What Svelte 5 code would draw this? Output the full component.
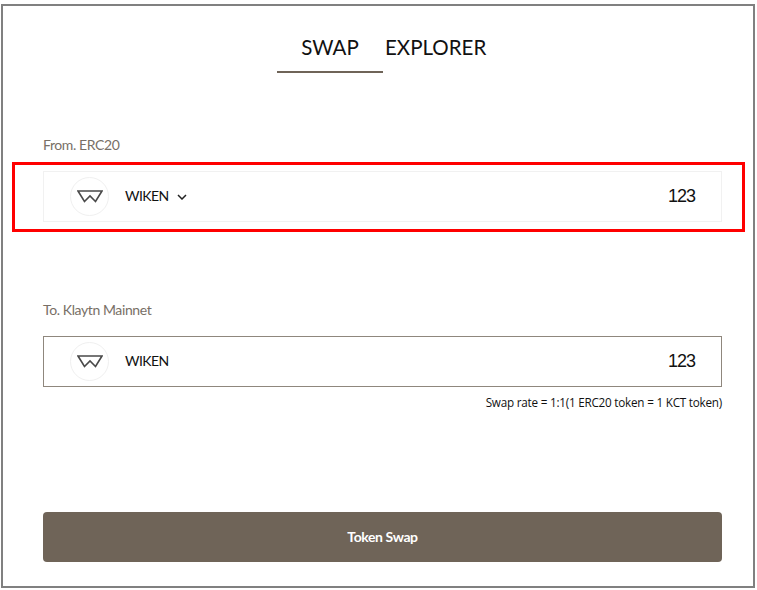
<script lang="ts">
  const tabs = [
    { name: "SWAP", active: true },
    { name: "EXPLORER", active: false },
  ];
</script>

{#snippet logo()}
  <span class="logo">
    <svg width="26" height="13" viewBox="0 0 26 13" fill="none" stroke="#4a4a4a" stroke-width="1.6">
      <path d="M1 1H25L18.5 11.5L13 6L7.5 11.5Z" />
    </svg>
  </span>
{/snippet}

<div class="frame">
  <nav class="tabs">
    {#each tabs as tab}
      <span class="tab" class:active={tab.active}>{tab.name}</span>
    {/each}
  </nav>

  <section class="from">
    <div class="label">From. ERC20</div>
    <div class="highlight">
      <div class="token light">
        {@render logo()}
        <span class="name">WIKEN</span>
        <svg class="chevron" width="10" height="6" viewBox="0 0 10 6" fill="none" stroke="#222" stroke-width="1.5">
          <path d="M1 1L5 5L9 1" />
        </svg>
        <span class="amount">123</span>
      </div>
    </div>
  </section>

  <section class="to">
    <div class="label">To. Klaytn Mainnet</div>
    <div class="token dark">
      {@render logo()}
      <span class="name">WIKEN</span>
      <span class="amount">123</span>
    </div>
    <div class="rate">Swap rate = 1:1(1 ERC20 token = 1 KCT token)</div>
  </section>

  <button class="swap">Token Swap</button>
</div>

<style>
  :global(body) {
    background: #fff;
  }

  .frame {
    box-sizing: border-box;
    width: 754px;
    height: 584px;
    margin: 4px 0 0 1px;
    border: 2px solid #808080;
    padding: 0 32px 0 40px;
    font-family: Lato, sans-serif;
    color: #111;
  }

  .tabs {
    display: flex;
    margin-left: 234px;
    height: 67px;
  }

  .tab {
    box-sizing: border-box;
    height: 67px;
    padding-top: 28px;
    font-size: 20.5px;
    line-height: 26px;
  }

  .tab.active {
    width: 106px;
    text-align: center;
    border-bottom: 2px solid #6f6458;
    margin-right: 2px;
  }

  .from {
    margin-top: 63px;
  }

  .label {
    font-size: 14px;
    letter-spacing: -0.4px;
    line-height: 18px;
    color: #786f66;
  }

  .highlight {
    box-sizing: border-box;
    width: 733px;
    height: 70px;
    margin: 8px 0 0 -31px;
    border: 3px solid #f00;
    padding: 6px 0 0 28px;
  }

  .token {
    box-sizing: border-box;
    width: 679px;
    height: 51px;
    display: flex;
    align-items: center;
    padding: 0 26px;
  }

  .token.light {
    border: 1px solid #f1f1f1;
  }

  .token.dark {
    border: 1px solid #8f877d;
    margin-top: 17px;
  }

  .logo {
    box-sizing: border-box;
    width: 39px;
    height: 39px;
    border: 1px solid #f0f0f0;
    border-radius: 50%;
    display: flex;
    align-items: center;
    justify-content: center;
  }

  .name {
    margin: 0 0 2px 16px;
    font-size: 14px;
    letter-spacing: -0.6px;
    color: #111;
  }

  .chevron {
    margin-left: 9px;
  }

  .amount {
    margin: 0 0 1px auto;
    font-family: "Liberation Sans", sans-serif;
    font-size: 18px;
    letter-spacing: -1px;
  }

  .to {
    margin-top: 69px;
  }

  .rate {
    width: 679px;
    margin-top: 8px;
    text-align: right;
    font-family: "Open Sans", sans-serif;
    font-size: 11.7px;
    letter-spacing: -0.22px;
    line-height: 15px;
    color: #111;
  }

  .swap {
    display: block;
    width: 679px;
    height: 50px;
    margin-top: 102px;
    padding-bottom: 3px;
    border: none;
    border-radius: 4px;
    background: #6f6458;
    color: #fff;
    font-family: Lato, sans-serif;
    font-size: 14px;
    letter-spacing: -0.4px;
    font-weight: 700;
  }
</style>
